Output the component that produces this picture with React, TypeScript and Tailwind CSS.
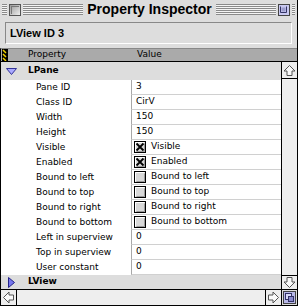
const rows: { name: string; value?: string; check?: boolean; label?: string }[] = [
  { name: "Pane ID", value: "3" },
  { name: "Class ID", value: "CirV" },
  { name: "Width", value: "150" },
  { name: "Height", value: "150" },
  { name: "Visible", check: true, label: "Visible" },
  { name: "Enabled", check: true, label: "Enabled" },
  { name: "Bound to left", check: false, label: "Bound to left" },
  { name: "Bound to top", check: false, label: "Bound to top" },
  { name: "Bound to right", check: false, label: "Bound to right" },
  { name: "Bound to bottom", check: false, label: "Bound to bottom" },
  { name: "Left in superview", value: "0" },
  { name: "Top in superview", value: "0" },
  { name: "User constant", value: "0" },
];

function Stripes({ className }: { className: string }) {
  return (
    <div
      className={`h-[11px] bg-[repeating-linear-gradient(to_bottom,#8a8a8a_0px,#8a8a8a_1px,#f4f4f4_1px,#f4f4f4_2px)] ${className}`}
    />
  );
}

function Checkbox({ checked }: { checked: boolean }) {
  return (
    <svg width="12" height="12" viewBox="0 0 12 12" className="shrink-0">
      <rect x="0.5" y="0.5" width="11" height="11" fill="#d8d8d8" stroke="#000" />
      <path d="M1.5 10.5V1.5H10.5" fill="none" stroke="#fff" />
      <path d="M2.5 10.5H10.5V2.5" fill="none" stroke="#999" />
      {checked && (
        <path d="M2.5 2.5L9.5 9.5M9.5 2.5L2.5 9.5" stroke="#000" strokeWidth="1.8" />
      )}
    </svg>
  );
}

function Arrow({ dir }: { dir: "up" | "down" | "left" | "right" }) {
  const rot = { up: 0, right: 90, down: 180, left: 270 }[dir];
  return (
    <svg width="15" height="15" viewBox="0 0 15 15">
      <g transform={`rotate(${rot} 7.5 7.5)`}>
        <path
          d="M7.5 2.5L13 8H10V12.5H5V8H2Z"
          fill="#fafafa"
          stroke="#555"
          strokeLinejoin="miter"
        />
      </g>
    </svg>
  );
}

export default function App() {
  return (
    <div className="w-[298px] h-[306px] flex flex-col bg-[#dddddd] border-r border-black font-['DejaVu_Sans',sans-serif] text-[9px] text-black overflow-hidden">
      {/* title bar */}
      <div className="h-[19px] flex items-center pl-[2px] pr-[2px] shrink-0">
        <Stripes className="w-[5px]" />
        <div className="mx-[2px] w-[12px] h-[12px] border border-[#555] bg-[linear-gradient(135deg,#9a9a9a,#eeeeee)] p-[1px]">
          <div className="w-full h-full border-t border-l border-[#777] border-b-white border-r-white" />
        </div>
        <Stripes className="flex-1" />
        <div className="px-[4px] font-['Liberation_Sans',sans-serif] font-bold text-[14px] leading-[19px]">
          Property Inspector
        </div>
        <Stripes className="flex-1" />
        <svg width="12" height="12" viewBox="0 0 12 12" className="mx-[2px] shrink-0">
          <rect x="0.5" y="0.5" width="11" height="11" fill="#c8c8f0" stroke="#444" />
          <path d="M2.5 2.5V8.5H8.5V2.5" fill="none" stroke="#333366" />
          <path d="M3.5 3.5H7.5V7.5H3.5Z" fill="#9c9ccc" />
        </svg>
        <Stripes className="w-[3px]" />
      </div>

      {/* object header */}
      <div className="h-[29px] px-[5px] pt-[3px] shrink-0">
        <div className="h-[22px] border-t border-l border-[#888] border-b-white border-r-white border-b border-r flex items-center pl-[4px] font-['Liberation_Sans',sans-serif] font-bold text-[11px]">
          LView ID 3
        </div>
      </div>

      {/* column header */}
      <div className="h-[14px] shrink-0 flex items-center bg-[#aaaaaa] border-t border-t-[#888] border-b border-black border-l">
        <svg width="6" height="12" viewBox="0 0 6 12" className="ml-[1px] shrink-0">
          <rect width="6" height="12" fill="#000" />
          <path d="M1 1L4 4M1 5L4 8M1 9L4 12" stroke="#f0d000" strokeWidth="1.5" />
        </svg>
        <div className="ml-[20px] w-[109px]">Property</div>
        <div>Value</div>
      </div>

      {/* body */}
      <div className="flex-1 flex min-h-0">
        <div className="flex-1 flex flex-col border-l border-black bg-white">
          <div className="h-[18px] bg-[#dddddd] flex items-center shrink-0">
            <svg width="11" height="7" viewBox="0 0 11 7" className="ml-[5px] shrink-0">
              <path d="M0.5 0.5H10.5L5.5 6.5Z" fill="#aaaaff" stroke="#333399" strokeLinejoin="round" />
            </svg>
            <span className="ml-[11px] font-bold">LPane</span>
          </div>
          {rows.map((r) => (
            <div key={r.name} className="h-[15px] flex shrink-0">
              <div className="w-[130px] pl-[35px] flex items-center">{r.name}</div>
              <div className="flex-1 border-l border-[#a8a8a8] border-b border-b-[#d0d0d0] flex items-center">
                {r.check === undefined ? (
                  <span className="pl-[4px]">{r.value}</span>
                ) : (
                  <>
                    <span className="pl-[2px]">
                      <Checkbox checked={r.check} />
                    </span>
                    <span className="pl-[5px]">{r.label}</span>
                  </>
                )}
              </div>
            </div>
          ))}
          <div className="h-[14px] bg-[#dddddd] flex items-center shrink-0">
            <svg width="7" height="11" viewBox="0 0 7 11" className="ml-[7px] shrink-0">
              <path d="M0.5 0.5L6.5 5.5L0.5 10.5Z" fill="#7777ee" stroke="#222288" strokeLinejoin="round" />
            </svg>
            <span className="ml-[13px] font-bold">LView</span>
          </div>
        </div>
        <div className="w-[16px] border-l border-black bg-[#eeeeee] flex flex-col justify-between">
          <div className="h-[17px] border-b border-black flex items-center justify-center">
            <Arrow dir="up" />
          </div>
          <div className="h-[14px] border-t border-black flex items-center justify-center">
            <Arrow dir="down" />
          </div>
        </div>
      </div>

      {/* horizontal scroll */}
      <div className="h-[17px] shrink-0 flex border-t border-b border-l border-black bg-[#eeeeee]">
        <div className="w-[16px] border-r border-black flex items-center justify-center">
          <Arrow dir="left" />
        </div>
        <div className="flex-1" />
        <div className="w-[16px] border-l border-black flex items-center justify-center">
          <Arrow dir="right" />
        </div>
        <div className="w-[16px] border-l border-black flex items-center justify-center bg-[#dddddd]">
          <svg width="13" height="13" viewBox="0 0 13 13">
            <rect x="0.5" y="0.5" width="12" height="12" fill="#b8b8e8" stroke="#444" />
            <rect x="2.5" y="2.5" width="6" height="6" fill="#d8d8f8" stroke="#333366" />
            <rect x="5.5" y="5.5" width="5" height="5" fill="#8888cc" stroke="#333366" />
          </svg>
        </div>
      </div>
    </div>
  );
}
